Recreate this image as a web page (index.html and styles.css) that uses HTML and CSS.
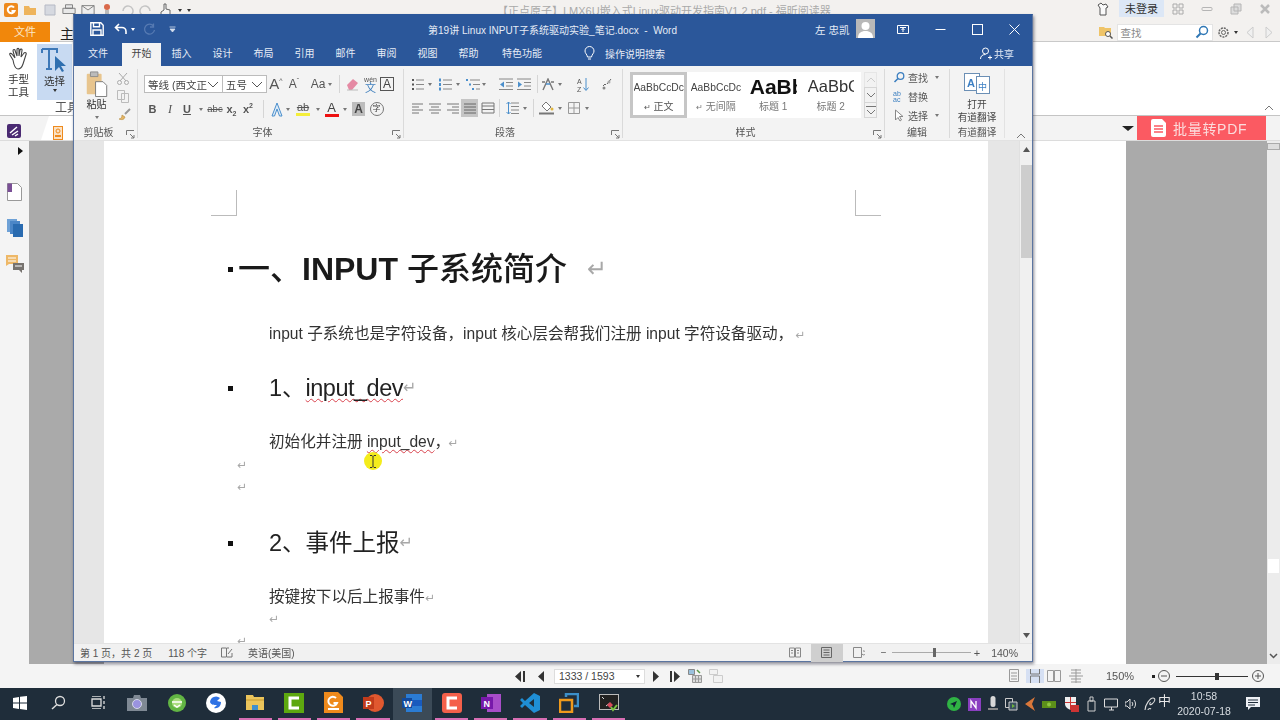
FILE: index.html
```html
<!DOCTYPE html>
<html lang="zh-CN">
<head>
<meta charset="utf-8">
<title>第19讲 Linux INPUT子系统驱动实验_笔记.docx - Word</title>
<link rel="stylesheet" href="styles.css">
</head>
<body>
<div class="screen">
  <div class="reader">
    <div class="rd-top">
      <div class="qa">
        <svg width="14" height="14" viewBox="0 0 14 14"><rect width="14" height="14" rx="2" fill="#ee8a1e"/><path d="M10 4.5A3.5 3.5 0 1 0 10.5 8H7.5" fill="none" stroke="#fff" stroke-width="2"/></svg>
        <svg width="14" height="14" viewBox="0 0 14 14"><path d="M1 3h5l1 2h6v7H1z" fill="#eeb45c"/></svg>
        <svg width="14" height="14" viewBox="0 0 14 14"><path d="M2 2h10v10H2z" fill="#d6d9e0" stroke="#b5b9c4"/></svg>
        <svg width="14" height="14" viewBox="0 0 16 14"><path d="M4 1h8v4H4zM1 5h14v6H1z" fill="#e8e8e8" stroke="#777"/></svg>
        <svg width="14" height="14" viewBox="0 0 16 14"><path d="M1 2h14v10H1zM1 2l7 5 7-5" fill="#eee" stroke="#777"/></svg>
        <svg width="14" height="14" viewBox="0 0 14 14"><circle cx="7" cy="4" r="3" fill="#d9694a"/><path d="M5 7h4v6H5z" fill="#bbb"/></svg>
        <svg width="14" height="14" viewBox="0 0 14 14"><path d="M3 8a5 5 0 1 1 2 4" fill="none" stroke="#c4c4c4" stroke-width="1.5"/></svg>
        <svg width="14" height="14" viewBox="0 0 14 14"><path d="M11 8a5 5 0 1 0-2 4" fill="none" stroke="#c4c4c4" stroke-width="1.5"/></svg>
        <svg width="14" height="14" viewBox="0 0 14 14"><path d="M6 1v6L3 9v4h9V7L8 6V1z" fill="#f4f4f4" stroke="#666"/></svg>
        <b class="dd dark"></b>
        <b class="dd dark"></b>
      </div>
      <div class="rd-title">【正点原子】I.MX6U嵌入式Linux驱动开发指南V1.2.pdf - 福昕阅读器</div>
      <div class="rd-win">
        <svg width="16" height="14" viewBox="0 0 16 14"><path d="M3 3l3-2 2 2 3-1 2 3-2 1v7H5V6z" fill="#fafafa" stroke="#555"/></svg>
        <span class="login">未登录</span>
        <svg width="12" height="12" viewBox="0 0 12 12"><path d="M1 1h4v4H1zM7 1h4v4H7zM1 7h4v4H1zM7 7h4v4H7z" fill="none" stroke="#aaa"/></svg>
        <svg width="12" height="12" viewBox="0 0 12 12"><rect x="1" y="4.500" width="10" height="3" rx="1" fill="none" stroke="#b5b5b5"/></svg>
        <svg width="12" height="12" viewBox="0 0 12 12"><path d="M4 1h7v7H4zM1 4h7v7H1z" fill="#ddd" stroke="#b5b5b5"/></svg>
        <svg width="12" height="12" viewBox="0 0 12 12"><path d="M2 2l8 8M10 2l-8 8" stroke="#bbb" stroke-width="2.500"/></svg>
      </div>
    </div>
    <div class="rd-menu">
      <span class="rd-file">文件</span>
      <span class="rd-home">主</span>
      <div class="rd-search-area">
        <svg width="14" height="14" viewBox="0 0 14 14"><path d="M0 2h5l1 1h6v8H0z" fill="#efc468"/><circle cx="9" cy="9" r="2.500" fill="#fff" stroke="#555"/><path d="M11 11l2.500 2.500" stroke="#555" stroke-width="1.500"/></svg>
        <div class="rd-search"><span>查找</span><svg width="14" height="14" viewBox="0 0 14 14"><circle cx="8.500" cy="5.500" r="4" fill="none" stroke="#2f77b5" stroke-width="1.500"/><path d="M5.500 8.500L1.500 12.500" stroke="#2f77b5" stroke-width="2"/></svg></div>
        <svg width="13" height="13" viewBox="0 0 13 13"><circle cx="6.500" cy="6.500" r="4.500" fill="none" stroke="#666" stroke-width="1.500" stroke-dasharray="2 1"/><circle cx="6.500" cy="6.500" r="2" fill="none" stroke="#666"/></svg>
        <b class="dd dark"></b>
        <svg class="nav-l" width="10" height="13" viewBox="0 0 10 13"><path d="M8 1L2 6.500 8 12z" fill="#f0f0f0" stroke="#ccc"/></svg>
        <svg class="nav-r" width="10" height="13" viewBox="0 0 10 13"><path d="M2 1l6 5.500L2 12z" fill="#f0f0f0" stroke="#ccc"/></svg>
      </div>
    </div>
    <div class="rd-ribbon">
      <div class="rd-tool">
        <svg width="24" height="24" viewBox="0 0 24 24"><path d="M6 13L3 8c-1-2 1-2 2-1l3 4-2-7c0-2 2-2 2-.5L10 9V2.500c0-1.500 2-1.500 2 0V9l1-6c.5-1.500 2.500-1 2 .5L14 10l3-4c1-1 3 0 2 1.500L16 17c-1 3-2 5-5 5-3 0-4-3-5-9z" fill="#fff" stroke="#444" stroke-width="1.100"/></svg>
        <span>手型<br>工具</span>
      </div>
      <div class="rd-tool sel">
        <svg width="30" height="26" viewBox="0 0 30 26"><path d="M2 1h15v4M9 1v20M6 21h6M2 5V1" fill="none" stroke="#3d78b8" stroke-width="2"/><path d="M15 8v15l4-4 3 5 2-1-3-5h5z" fill="#2f6fb0"/></svg>
        <span>选择</span><b class="dd dark"></b>
      </div>
      <div class="rd-grp">工具</div>
      <svg class="rd-up" width="10" height="6" viewBox="0 0 10 6"><path d="M1 5l4-4 4 4" fill="none" stroke="#777"/></svg>
    </div>
    <div class="rd-tabs">
      <svg class="rd-logo" width="14" height="14" viewBox="0 0 14 14"><rect width="14" height="14" rx="2" fill="#4a2a72"/><path d="M3 9l7-6M5 11l6-4M8 12l3-2" stroke="#fff" stroke-width="1.500"/></svg>
      <div class="rd-tab"><svg width="10" height="14" viewBox="0 0 10 14"><rect x=".5" y=".5" width="9" height="13" fill="#fbe2c4" stroke="#ee8a1e"/><circle cx="5" cy="5" r="2" fill="none" stroke="#ee8a1e"/><path d="M2 10h6" stroke="#ee8a1e" stroke-width="2"/></svg></div>
      <b class="dd big"></b>
      <div class="batch"><svg width="16" height="18" viewBox="0 0 16 18"><path d="M2 0h9l4 4v12a2 2 0 0 1-2 2H2a2 2 0 0 1-2-2V2a2 2 0 0 1 2-2z" fill="#fff"/><path d="M3 7h9M3 10h9M3 13h9" stroke="#fb5a62" stroke-width="1.300"/></svg><span>批量转PDF</span></div>
    </div>
    <div class="rd-main">
      <div class="rd-side">
        <b class="side-arrow"></b>
        <svg width="15" height="18" viewBox="0 0 15 18"><path d="M.5.500h10l4 4v13H.5z" fill="#fff" stroke="#999"/><path d="M.5.500H5V9H.5z" fill="#7a4f96"/></svg>
        <svg width="16" height="18" viewBox="0 0 16 18"><path d="M0 0h10v13H0z" fill="#6ea1d6"/><path d="M3 2h10v13H3z" fill="#4b86c7"/><path d="M6 5h10v13H6z" fill="#2a6bb0"/></svg>
        <svg width="18" height="18" viewBox="0 0 18 18"><path d="M0 0h12v9H3l-3 2z" fill="#eeb867"/><path d="M2 3h8M2 6h8" stroke="#fff"/><path d="M7 8h11v7h-2v3l-3-3H7z" fill="#77736f"/><path d="M9 11h7" stroke="#fff"/></svg>
      </div>
      <div class="rd-gray left"></div>
      <div class="rd-page"></div>
      <div class="rd-gray right"></div>
      <div class="rd-scroll"><i class="th-top"></i><i class="th-mid"></i><svg width="9" height="6" viewBox="0 0 9 6"><path d="M1 1l3.500 3.500L8 1" fill="none" stroke="#555" stroke-width="1.500"/></svg></div>
    </div>
    <div class="rd-status">
      <div class="rd-nav">
        <svg width="12" height="11" viewBox="0 0 12 11"><path d="M7 0v11L1 5.500zM9 0h2v11H9z" fill="#333"/></svg>
        <svg class="gap-n" width="7" height="11" viewBox="0 0 7 11"><path d="M6 0v11L0 5.500z" fill="#333"/></svg>
        <div class="page-box"><span>1333 / 1593</span><b class="dd dark"></b></div>
        <svg width="7" height="11" viewBox="0 0 7 11"><path d="M1 0v11l6-5.500z" fill="#333"/></svg>
        <svg class="gap-n" width="12" height="11" viewBox="0 0 12 11"><path d="M5 0v11l6-5.500zM1 0h2v11H1z" fill="#333"/></svg>
        <svg width="14" height="14" viewBox="0 0 14 14"><path d="M.5.500h6v5h-6z" fill="#9ac1dc" stroke="#888"/><path d="M4.500 6.500h9v7h-9zM7.500 6.500v7M10.500 6.500v7M4.500 10h9" fill="#ddd" stroke="#999"/><path d="M9 1l3 3" stroke="#5a9a4a" stroke-width="1.500"/></svg>
        <svg width="14" height="14" viewBox="0 0 14 14"><path d="M.5.500h8v5h-8zM4.500 6.500h9v7h-9z" fill="#f2f2f2" stroke="#ccc"/></svg>
      </div>
      <div class="rd-view">
        <svg class="v-first" width="12" height="14" viewBox="0 0 12 14"><path d="M.5.500h9v12h-9zM2 4h6M2 7h6M2 10h6" fill="none" stroke="#999"/></svg>
        <span class="view-on"><svg width="12" height="14" viewBox="0 0 12 14"><path d="M1.500 0v5h9V0M1.500 14V7h9v7" fill="none" stroke="#777"/></svg></span>
        <svg width="14" height="14" viewBox="0 0 14 14"><path d="M.5 1.500h6v11h-6zM7.500 1.500h6v11h-6z" fill="none" stroke="#999"/></svg>
        <svg width="14" height="14" viewBox="0 0 14 14"><path d="M2 1h10M2 4h10M0 7h14M7 0v14M2 10h10M2 13h10" fill="none" stroke="#999"/></svg>
        <span class="zoom-txt">150%</span>
        <b class="dot"></b>
        <svg width="12" height="12" viewBox="0 0 12 12"><circle cx="6" cy="6" r="5.500" fill="none" stroke="#555"/><path d="M3 6h6" stroke="#555"/></svg>
        <div class="rd-slider"><i></i></div>
        <svg width="12" height="12" viewBox="0 0 12 12"><circle cx="6" cy="6" r="5.500" fill="none" stroke="#555"/><path d="M3 6h6M6 3v6" stroke="#555"/></svg>
      </div>
    </div>
    <div class="taskbar">
      <div class="tb-apps">
        <div class="tb"><svg width="14" height="14" viewBox="0 0 14 14"><path d="M0 2l6-1v5.500H0zM7 .800L14 0v6.500H7zM0 7.500h6V13l-6-1zM7 7.500h7V14l-7-1z" fill="#fff"/></svg></div>
        <div class="tb"><svg width="15" height="15" viewBox="0 0 15 15"><circle cx="9" cy="6" r="4.500" fill="none" stroke="#ddd" stroke-width="1.300"/><path d="M6 9.500L1 14" stroke="#ddd" stroke-width="1.500"/></svg></div>
        <div class="tb"><svg width="15" height="13" viewBox="0 0 15 13"><path d="M1 3h9v7H1zM1 0h9M1 13h9M13 0v3M13 5v3M13 10v3" fill="none" stroke="#ddd" stroke-width="1.300"/></svg></div>
        <div class="tb"><svg width="20" height="16" viewBox="0 0 20 16"><path d="M0 3h6l1-3h6l1 3h6v13H0z" fill="#7f8994"/><circle cx="10" cy="9" r="4.500" fill="#9a93e0" stroke="#d5d8e8"/></svg></div>
        <div class="tb"><svg width="18" height="18" viewBox="0 0 18 18"><circle cx="9" cy="9" r="9" fill="#62b544"/><circle cx="9" cy="9" r="5" fill="#a9dd7e"/><path d="M4 8h10M6 11l3 2 3-2" stroke="#fff" stroke-width="1.500" fill="none"/></svg></div>
        <div class="tb"><svg width="20" height="20" viewBox="0 0 20 20"><circle cx="10" cy="10" r="10" fill="#fff"/><path d="M4 9a6 6 0 0 1 10-4l-3 3 4 1c0 4-3 7-7 6l3-3c-3 0-6 0-7-3z" fill="#2f72e4"/></svg></div>
        <div class="tb run"><svg width="18" height="15" viewBox="0 0 18 15"><path d="M0 0h7l1 2h10v13H0z" fill="#ebc45b"/><path d="M0 5h18" stroke="#c79a2e"/><path d="M6 10h6v5H6z" fill="#3f8fcf"/></svg></div>
        <div class="tb run"><svg width="20" height="20" viewBox="0 0 20 20"><rect width="20" height="20" fill="#5da80f"/><path d="M15 5H6v10h9" fill="none" stroke="#fff" stroke-width="3"/></svg></div>
        <div class="tb run"><svg width="19" height="21" viewBox="0 0 19 21"><path d="M0 0h14l5 5v16H0z" fill="#ef8a1c"/><path d="M12 6a4.500 4.500 0 1 0 1 5H9.500" fill="none" stroke="#fff" stroke-width="2"/><path d="M4 17h11" stroke="#fff" stroke-width="2"/></svg></div>
        <div class="tb run"><svg width="21" height="18" viewBox="0 0 21 18"><circle cx="12" cy="9" r="9" fill="#e0582f"/><rect y="3" width="11" height="12" fill="#c13b1b"/><text x="2.500" y="13" class="tb-t">P</text></svg></div>
        <div class="tb active"><svg width="20" height="18" viewBox="0 0 20 18"><path d="M4 0h16v18H4z" fill="#2b7cd3"/><path d="M4 6h16v6H4z" fill="#185abd"/><rect y="4" width="10" height="10" fill="#124a9c"/><text x="1.500" y="12.500" class="tb-t">W</text></svg></div>
        <div class="tb run"><svg width="20" height="20" viewBox="0 0 20 20"><rect width="20" height="20" rx="3" fill="#f4604a"/><path d="M15 5H6v10h9" fill="none" stroke="#fff" stroke-width="3"/></svg></div>
        <div class="tb run"><svg width="20" height="18" viewBox="0 0 20 18"><path d="M6 0h14v18H6z" fill="#a84dc9"/><rect y="3" width="12" height="12" fill="#7719aa"/><text x="2.500" y="12.500" class="tb-t">N</text></svg></div>
        <div class="tb run"><svg width="20" height="20" viewBox="0 0 20 20"><path d="M14 0l6 3v14l-6 3L5 12l-3 3-2-2 3-3-3-3 2-2 3 3zM14 6l-5 4 5 4z" fill="#1f8fd6" fill-rule="evenodd"/></svg></div>
        <div class="tb run"><svg width="20" height="20" viewBox="0 0 20 20"><path d="M7 4V1h12v12h-4" fill="none" stroke="#3b8fc9" stroke-width="2.500"/><path d="M1 7h12v12H1z" fill="none" stroke="#ef9a1c" stroke-width="2.500"/></svg></div>
        <div class="tb run"><svg width="20" height="18" viewBox="0 0 20 18"><rect x=".5" y=".5" width="19" height="15" fill="#222" stroke="#bbb"/><path d="M3 3l2 2M7 12l4-3 2 2" stroke="#ddd"/><path d="M8 11l3-3 3 3-3 3z" fill="#d94a5a"/><path d="M12 13l2 3 4-5" stroke="#7ac143" stroke-width="2" fill="none"/></svg></div>
      </div>
      <div class="tray">
        <svg width="14" height="14" viewBox="0 0 14 14"><circle cx="7" cy="7" r="7" fill="#2fb344"/><path d="M3 7l7-3-3 7-1-3z" fill="#123"/></svg>
        <svg width="13" height="13" viewBox="0 0 13 13"><rect width="13" height="13" fill="#8a3fc0"/><path d="M3 10V3l5 7V3" stroke="#fff" fill="none" stroke-width="1.300"/></svg>
        <svg width="10" height="16" viewBox="0 0 10 16"><rect x="2.500" width="5" height="11" rx="2.500" fill="#d8d8d8"/><path d="M0 13h10" stroke="#888" stroke-width="2"/></svg>
        <svg width="13" height="13" viewBox="0 0 13 13"><path d="M.5.500h7v9h-7z" fill="none" stroke="#ccc"/><path d="M4 4h8v8H4z" fill="#3a5060" stroke="#ccc"/><path d="M7 6l3 2-3 2z" fill="#6db33f"/></svg>
        <svg width="10" height="14" viewBox="0 0 10 14"><path d="M10 0L0 7l10 7-3-7z" fill="#d9773a"/></svg>
        <svg width="14" height="10" viewBox="0 0 14 10"><path d="M0 2h14v7H0z" fill="#5c8f1a"/><circle cx="7" cy="5.500" r="2" fill="#8ec63f"/></svg>
        <svg width="16" height="16" viewBox="0 0 16 16"><path d="M2 1h11v7c0 3-3 5-5.500 6C5 13 2 11 2 8z" fill="#eee"/><path d="M7 1h1v13H7zM2 6h11v1H2z" fill="#c33"/><rect x="8" y="9" width="8" height="7" fill="#c33"/></svg>
        <svg width="11" height="16" viewBox="0 0 11 16"><path d="M2 5h7v10H2zM4 1h3v4H4z" fill="none" stroke="#ccc"/></svg>
        <svg width="14" height="13" viewBox="0 0 14 13"><path d="M.5 1h13v8H.5zM5 12h5M7.500 9v3" fill="none" stroke="#ddd"/></svg>
        <svg width="12" height="12" viewBox="0 0 12 12"><path d="M0 4h2l3-3v10L2 8H0z" fill="none" stroke="#ddd"/><path d="M7 4a3 3 0 0 1 0 4M9 2a6 6 0 0 1 0 8" fill="none" stroke="#ddd"/></svg>
        <svg width="12" height="14" viewBox="0 0 12 14"><path d="M1 13C1 8 6 1 9 1c3 0 2 4-1 6-2 1.500-3 0-1.500-2M4 13c0-1 2-2 3-1" fill="none" stroke="#ddd" stroke-width="1.100"/></svg>
        <span class="ime">中</span>
        <div class="clock"><span>10:58</span><span>2020-07-18</span></div>
        <svg class="notify" width="14" height="14" viewBox="0 0 14 14"><path d="M0 0h14v10H5l-3 3v-3H0z" fill="#eef1f5"/><path d="M2 3h10M2 5.500h10M2 8h7" stroke="#1f2d3a"/></svg>
      </div>
    </div>
  </div>

  <section class="word">
    <header class="w-title">
      <div class="w-qa">
        <svg width="14" height="14" viewBox="0 0 14 14"><path d="M.8.8h10l2.400 2.400v10H.8zM3.500.8v4h6v-4M3 13V8h8v5" fill="none" stroke="#fff" stroke-width="1.400"/></svg>
        <svg class="q-undo" width="14" height="12" viewBox="0 0 14 12"><path d="M5 1L1.500 4.500 5 8M2 4.500h6a4 4 0 0 1 4 4V11" fill="none" stroke="#fff" stroke-width="1.600"/></svg>
        <b class="dd white"></b>
        <svg class="q-redo" width="13" height="13" viewBox="0 0 13 13"><path d="M10.500 3a5 5 0 1 0 1 4M10.500 .5V4H7" fill="none" stroke="#567ab2" stroke-width="1.300"/></svg>
        <svg class="q-more" width="7" height="7" viewBox="0 0 7 7"><path d="M.5 1h6M1 3l2.500 3L6 3z" fill="#d6dfee" stroke="#d6dfee" stroke-width=".8"/></svg>
      </div>
      <div class="w-name">第19讲 Linux INPUT子系统驱动实验_笔记.docx&nbsp; - &nbsp;Word</div>
      <div class="w-user">左 忠凯</div>
      <svg class="w-avatar" width="19" height="19" viewBox="0 0 19 19"><rect width="19" height="19" fill="#b8b8b8"/><circle cx="9.500" cy="7" r="4" fill="#fff"/><path d="M2 19c0-5 3-7 7.500-7S17 14 17 19z" fill="#fff"/></svg>
      <div class="w-ctl">
        <svg width="12" height="11" viewBox="0 0 12 11"><path d="M.5 1.500h11v8H.5zM3 3.500h6M6 4v4M4.500 6L6 4.500 7.500 6" fill="none" stroke="#fff"/></svg>
        <svg width="11" height="11" viewBox="0 0 11 11"><path d="M.5 5.500h10" stroke="#fff"/></svg>
        <svg width="11" height="11" viewBox="0 0 11 11"><rect x=".5" y=".5" width="10" height="10" fill="none" stroke="#fff"/></svg>
        <svg width="11" height="11" viewBox="0 0 11 11"><path d="M.5.500l10 10M10.500.5l-10 10" stroke="#fff"/></svg>
      </div>
    </header>
    <nav class="w-tabs">
      <span class="t first">文件</span><span class="t on">开始</span><span class="t">插入</span><span class="t">设计</span><span class="t">布局</span><span class="t">引用</span><span class="t">邮件</span><span class="t">审阅</span><span class="t">视图</span><span class="t">帮助</span><span class="t wide">特色功能</span>
      <svg class="bulb" width="11" height="15" viewBox="0 0 11 15"><path d="M3.500 11C3 8 1 7.500 1 5a4.500 4.500 0 0 1 9 0c0 2.500-2 3-2.500 6zM4 13h3" fill="none" stroke="#fff"/></svg>
      <span class="t-help">操作说明搜索</span>
      <span class="share"><svg width="12" height="13" viewBox="0 0 12 13"><circle cx="5.500" cy="4" r="3" fill="none" stroke="#fff"/><path d="M.5 12c0-3 2-4.500 5-4.500M8 10.500h4M10 8.500v4" fill="none" stroke="#fff"/></svg>共享</span>
    </nav>
    <div class="w-ribbon">
      <div class="grp g-clip">
        <div class="clip-body">
          <div class="paste">
            <svg width="23" height="26" viewBox="0 0 23 28"><rect x="1" y="3" width="16" height="22" rx="1" fill="#e8c58e"/><path d="M5 1h8v5H5z" fill="#bbb" stroke="#8a8a8a"/><path d="M10.500 11.500h8l4 4v12h-12z" fill="#fff" stroke="#777"/></svg>
            <span>粘贴</span><b class="dd"></b>
          </div>
          <div class="clip-side">
            <svg width="12" height="13" viewBox="0 0 12 13"><path d="M2 1l7 8M10 1L3 9" stroke="#aaa"/><circle cx="2.500" cy="10.500" r="2" fill="none" stroke="#aaa"/><circle cx="9.500" cy="10.500" r="2" fill="none" stroke="#aaa"/></svg>
            <svg width="12" height="13" viewBox="0 0 12 13"><path d="M.5.500h7v9h-7zM4.500 3.500h7v9h-7z" fill="#f3f3f3" stroke="#bbb"/></svg>
            <svg width="14" height="13" viewBox="0 0 14 13"><path d="M8 6l5-5" stroke="#999" stroke-width="2"/><path d="M2 11c2 0 3-2 3-4l3 2c-1 3-3 3-6 2z" fill="#e4b565" stroke="#b58a3a" stroke-width=".6"/></svg>
          </div>
        </div>
        <div class="g-label">剪贴板<svg class="launch" width="9" height="9" viewBox="0 0 9 9"><path d="M.5 5V.5H8M4 4l4 4M8 5v3H5" fill="none" stroke="#777"/></svg></div>
      </div>
      <div class="grp g-font">
        <div class="rows">
          <div class="row r-font1">
            <div class="combo cf"><span>等线 (西文正文</span><svg width="12" height="7" viewBox="0 0 12 7"><path d="M1 1l5 5 5-5" fill="none" stroke="#555"/></svg></div>
            <div class="combo cs"><span>五号</span><svg width="12" height="7" viewBox="0 0 12 7"><path d="M1 1l5 5 5-5" fill="none" stroke="#555"/></svg></div>
            <span class="cmd a-big">A<sup>^</sup></span>
            <span class="cmd a-small">A<sup>ˇ</sup></span>
            <i></i>
            <span class="cmd aa">Aa</span><b class="dd"></b>
            <u class="sep"></u>
            <svg width="15" height="14" viewBox="0 0 15 14"><path d="M2 8l6-6 5 4-6 7H4z" fill="#e58aa4"/><path d="M2 13h11" stroke="#bbb"/></svg>
            <span class="wen"><small>wén</small>文</span>
            <span class="abox">A</span>
          </div>
          <div class="row r-font2">
            <span class="cmd fb">B</span><span class="cmd fi">I</span><span class="cmd fu">U</span><b class="dd"></b>
            <span class="cmd fs">abc</span><span class="cmd fx">x<sub>2</sub></span><span class="cmd fx">x<sup>2</sup></span>
            <u class="sep"></u>
            <svg width="14" height="15" viewBox="0 0 14 15"><path d="M7 1l5 13H9.500L7 7 4.500 14H2z" fill="#dcebf8" stroke="#4b8fcc"/></svg><b class="dd"></b>
            <span class="hl">ab</span><b class="dd"></b>
            <span class="colr">A</span><b class="dd"></b>
            <span class="shade">A</span>
            <span class="circled">字</span>
          </div>
        </div>
        <div class="g-label shift">字体<svg class="launch" width="9" height="9" viewBox="0 0 9 9"><path d="M.5 5V.5H8M4 4l4 4M8 5v3H5" fill="none" stroke="#777"/></svg></div>
      </div>
      <div class="grp g-para">
        <div class="rows">
          <div class="row r-p1">
            <svg width="12" height="13" viewBox="0 0 12 13"><path d="M4 2h8M4 6.500h8M4 11h8" stroke="#888"/><path d="M0 1h2v2H0zM0 5.500h2v2H0zM0 10h2v2H0z" fill="#555"/></svg><b class="dd"></b>
            <svg width="14" height="13" viewBox="0 0 14 13"><path d="M5 2h9M5 6.500h9M5 11h9" stroke="#888"/><path d="M1 .5h2v3H1zM1 5h2v3H1zM1 9.500h2v3H1z" fill="#4b8fcc"/></svg><b class="dd"></b>
            <i></i>
            <svg width="14" height="13" viewBox="0 0 14 13"><path d="M4 2h10M7 6.500h7M10 11h4" stroke="#888"/><path d="M0 1h2v2H0zM3 5.500h2v2H3zM6 10h2v2H6z" fill="#4b8fcc"/></svg><b class="dd"></b>
            <i></i>
            <svg width="14" height="13" viewBox="0 0 14 13"><path d="M0 1h14M7 4.500h7M7 8h7M0 11.500h14" stroke="#888"/><path d="M5 3.500v6L1 6.500z" fill="#4b8fcc"/></svg>
            <svg width="14" height="13" viewBox="0 0 14 13"><path d="M0 1h14M7 4.500h7M7 8h7M0 11.500h14" stroke="#888"/><path d="M1 3.500v6l4-3z" fill="#4b8fcc"/></svg>
            <u class="sep"></u>
            <svg width="14" height="13" viewBox="0 0 14 13"><path d="M2 12L7 1l5 11M1 4h3M10 4h3" fill="none" stroke="#777" stroke-width="1.400"/><path d="M5 6h4" stroke="#4b8fcc" stroke-width="1.500"/></svg><b class="dd"></b>
            <i></i>
            <svg width="12" height="15" viewBox="0 0 12 15"><text x="0" y="6.500" class="sort-t">A</text><text x="0" y="14.500" class="sort-t">Z</text><path d="M9 1v12M6.500 10.500L9 13.500l2.500-3" fill="none" stroke="#4b8fcc"/></svg>
            <i></i>
            <svg width="10" height="13" viewBox="0 0 10 13"><path d="M1 8l2-2 1 1M5 6l4-5" stroke="#666" fill="none"/><circle cx="2" cy="10" r="1.500" fill="#888"/><circle cx="7" cy="4" r="1.500" fill="#aaa"/></svg>
          </div>
          <div class="row r-p2">
            <svg width="11" height="11" viewBox="0 0 11 11"><path d="M0 1h11M0 4h7M0 7h11M0 10h7" stroke="#777"/></svg>
            <svg width="12" height="11" viewBox="0 0 12 11"><path d="M0 1h12M2 4h8M0 7h12M2 10h8" stroke="#777"/></svg>
            <svg width="12" height="11" viewBox="0 0 12 11"><path d="M0 1h12M5 4h7M0 7h12M5 10h7" stroke="#777"/></svg>
            <span class="just"><svg width="12" height="11" viewBox="0 0 12 11"><path d="M0 1h12M0 4h12M0 7h12M0 10h12" stroke="#666"/></svg></span>
            <svg width="14" height="12" viewBox="0 0 14 12"><path d="M1 1h12M1 11h12M1 4h12M1 7.500h12M1 1v10M13 1v10" stroke="#777" fill="none"/></svg>
            <u class="sep"></u>
            <svg width="13" height="14" viewBox="0 0 13 14"><path d="M5 2h8M5 5.500h8M5 9h8M5 12.500h8" stroke="#888"/><path d="M2.500 1v12M.5 3l2-2 2 2M.5 11l2 2 2-2" fill="none" stroke="#4b8fcc"/></svg><b class="dd"></b>
            <u class="sep"></u>
            <svg width="15" height="14" viewBox="0 0 15 14"><path d="M7 1l5 5-4 4-5-5z" fill="#fff" stroke="#777"/><path d="M0 12.500h15" stroke="#777" stroke-width="2"/><circle cx="13" cy="8" r="1.500" fill="#e1b53b"/></svg><b class="dd"></b>
            <svg width="12" height="12" viewBox="0 0 12 12"><path d="M.5.500h11v11H.5zM6 .5v11M.5 6h11" fill="none" stroke="#999"/></svg><b class="dd"></b>
          </div>
        </div>
        <div class="g-label shift">段落<svg class="launch" width="9" height="9" viewBox="0 0 9 9"><path d="M.5 5V.5H8M4 4l4 4M8 5v3H5" fill="none" stroke="#777"/></svg></div>
      </div>
      <div class="grp g-style">
        <div class="style-body">
          <div class="gallery">
            <div class="st st-on"><span class="st-a">AaBbCcDc</span><span class="st-l"><em>↵</em> 正文</span></div>
            <div class="st"><span class="st-a">AaBbCcDc</span><span class="st-l"><em>↵</em> 无间隔</span></div>
            <div class="st"><span class="st-a h1">AaBbC</span><span class="st-l">标题 1</span></div>
            <div class="st"><span class="st-a h2">AaBbCc</span><span class="st-l">标题 2</span></div>
          </div>
          <div class="spin">
            <span><svg width="10" height="6" viewBox="0 0 10 6"><path d="M1 5l4-4 4 4" fill="none" stroke="#ccc"/></svg></span>
            <span><svg width="10" height="6" viewBox="0 0 10 6"><path d="M1 1l4 4 4-4" fill="none" stroke="#777"/></svg></span>
            <span><svg width="10" height="9" viewBox="0 0 10 9"><path d="M0 .5h10M1 4l4 4 4-4" fill="none" stroke="#777"/></svg></span>
          </div>
        </div>
        <div class="g-label shift">样式<svg class="launch" width="9" height="9" viewBox="0 0 9 9"><path d="M.5 5V.5H8M4 4l4 4M8 5v3H5" fill="none" stroke="#777"/></svg></div>
      </div>
      <div class="grp g-edit">
        <div class="edit-body">
          <div class="ed"><svg width="11" height="11" viewBox="0 0 11 11"><circle cx="7" cy="4" r="3.300" fill="none" stroke="#3c7fc0" stroke-width="1.300"/><path d="M4.500 6.500L1 10" stroke="#3c7fc0" stroke-width="1.600"/></svg><span>查找</span><b class="dd"></b></div>
          <div class="ed"><span class="abc">ab<br>ac</span><span>替换</span></div>
          <div class="ed"><svg width="11" height="13" viewBox="0 0 11 13"><path d="M2 1v10l2.500-2.500L6.500 12 8 11 6 7.500h3.500z" fill="#fff" stroke="#888"/></svg><span>选择</span><b class="dd"></b></div>
        </div>
        <div class="g-label">编辑</div>
      </div>
      <div class="grp g-trans">
        <div class="trans-body">
          <svg width="26" height="21" viewBox="0 0 26 21"><rect x=".5" y=".5" width="15" height="17" fill="#fff" stroke="#6b8fb5"/><rect x="12.500" y="3.500" width="13" height="17" fill="#fff" stroke="#6b8fb5"/><text x="3" y="13.500" class="tr-a">A</text><text x="14" y="16.500" class="tr-z">中</text></svg>
          <span>打开<br>有道翻译</span>
        </div>
        <div class="g-label">有道翻译</div>
      </div>
      <svg class="collapse" width="10" height="6" viewBox="0 0 10 6"><path d="M1 5l4-4 4 4" fill="none" stroke="#777"/></svg>
    </div>
    <div class="w-doc">
      <div class="w-margin"></div>
      <article class="w-page">
        <div class="crops"><i class="crop c-l"></i><i class="crop c-r"></i></div>
        <h1 class="d-h1"><span class="mk mk-h1"></span>一、<b>INPUT</b> 子系统简介 <em class="ret big">↵</em></h1>
        <p class="d-p first">input 子系统也是字符设备，input 核心层会帮我们注册 input 字符设备驱动，<em class="ret">↵</em></p>
        <h2 class="d-h2"><span class="mk"></span>1、<span class="wavy">input_dev</span><em class="ret mid">↵</em></h2>
        <p class="d-p sec"><span class="wt">初始化并注册 <span class="wavy">input_dev</span>，</span><em class="ret">↵</em></p>
        <p class="d-e"><em class="ret">↵</em></p>
        <p class="d-e"><em class="ret">↵</em></p>
        <h2 class="d-h2 two"><span class="mk"></span>2、事件上报<em class="ret mid">↵</em></h2>
        <p class="d-p third">按键按下以后上报事件<em class="ret">↵</em></p>
        <p class="d-e ind"><em class="ret">↵</em></p>
        <p class="d-e"><em class="ret">↵</em></p>
        <div class="pointer"><svg width="8" height="13" viewBox="0 0 8 13"><path d="M1 .5h2l1 1 1-1h2M4 1.500v10M1 12.500h2l1-1 1 1h2" fill="none" stroke="#333"/></svg></div>
      </article>
      <div class="w-margin r"></div>
      <div class="w-scroll">
        <svg width="7" height="5" viewBox="0 0 7 5"><path d="M3.500 0L7 5H0z" fill="#555"/></svg>
        <i class="w-thumb"></i>
        <svg class="down" width="7" height="5" viewBox="0 0 7 5"><path d="M3.500 5L7 0H0z" fill="#555"/></svg>
      </div>
    </div>
    <footer class="w-status">
      <span>第 1 页，共 2 页</span><span class="st2">118 个字</span>
      <svg class="st3" width="12" height="11" viewBox="0 0 12 11"><path d="M.5 1h5v9h-5zM6 1h2M6 10h5V6M7 7l4-5" fill="none" stroke="#777"/></svg>
      <span class="st4">英语(美国)</span>
      <div class="w-right">
        <svg width="12" height="11" viewBox="0 0 12 11"><path d="M.5 1h5v9h-5zM6.500 1h5v9h-5zM2 3.500h2M2 6h2M8 3.500h2M8 6h2" fill="none" stroke="#888"/></svg>
        <span class="w-view"><svg width="11" height="11" viewBox="0 0 11 11"><path d="M.5.500h10v10H.5zM2.500 3h6M2.500 5.500h6M2.500 8h6" fill="none" stroke="#666"/></svg></span>
        <svg width="12" height="11" viewBox="0 0 12 11"><path d="M.5.500h8v10H.5zM10 4a2 2 0 1 1-1 3" fill="none" stroke="#888"/></svg>
        <span class="minus">−</span>
        <div class="w-slider"><i></i></div>
        <span class="plus">+</span>
        <span class="pct">140%</span>
      </div>
    </footer>
  </section>
</div>
</body>
</html>
```
FILE: styles.css
```css
* { box-sizing: border-box; }
html, body { margin: 0; padding: 0; width: 1280px; height: 720px; overflow: hidden; background: #f3f3f3; }
body { font-family: "Liberation Sans", "Noto Sans CJK SC", sans-serif; color: #444; font-size: 11px; }
i, em, b, u { font-style: normal; text-decoration: none; }
svg { display: block; flex: none; }
.screen { position: relative; width: 1280px; height: 720px; overflow: hidden; filter: blur(.45px); }

/* dropdown arrows */
.dd { display: block; width: 0; height: 0; border: 2.500px solid transparent; border-top: 3px solid #777; border-bottom: 0; flex: none; }
.dd.dark { border-top-color: #333; }
.dd.white { border-top-color: #fff; }
.dd.big { border-width: 5px 6px 0; border-top-color: #222; }

/* background reader */
.reader { display: flex; flex-direction: column; width: 1280px; height: 720px; }
.rd-top { height: 21px; display: flex; align-items: flex-start; background: #f3f1ef; }
.qa { width: 500px; padding: 3px 0 0 4px; display: flex; align-items: center; gap: 5.300px; }
.rd-title { font-size: 11px; color: #a9a9a9; white-space: nowrap; width: 590px; padding-top: 3px; line-height: 16px; margin-left: -3px; }
.rd-win { flex: 1; display: flex; align-items: center; height: 17px; margin-left: -3px; padding-right: 9px; justify-content: flex-end; gap: 17px; }
.login { width: 45px; height: 17px; margin: 0 -9px 0 -9px; background: #dce7f6; color: #333; text-align: center; line-height: 18px; }
.rd-menu { height: 21px; display: flex; background: #f3f1ef; border-bottom: 1px solid #c9c9c9; align-items: flex-start; }
.rd-file { width: 50px; height: 20px; margin-top: 1px; background: #f1870b; color: #fbe6c9; text-align: center; line-height: 20px; font-size: 11px; }
.rd-home { margin: 3px 0 0 10px; font-size: 14px; color: #222; line-height: 20px; }
.rd-search-area { margin-left: auto; display: flex; align-items: center; height: 18px; margin-top: 2px; padding-right: 6px; gap: 4px; }
.rd-search { width: 96px; height: 17px; background: #fff; border: 1px solid #e4e4e4; display: flex; align-items: center; justify-content: space-between; padding: 0 3px 0 3px; color: #888; font-size: 10.500px; }
.nav-l { margin-left: 3.500px; }
.nav-r { margin-left: 5px; }
.rd-ribbon { height: 74px; background: #fff; border-bottom: 1px solid #c4c4c4; display: flex; position: relative; padding-top: 2px; }
.rd-tool { width: 37px; display: flex; flex-direction: column; align-items: center; font-size: 10.500px; line-height: 13px; color: #333; padding-top: 3px; height: 56px; gap: 2px; text-align: center; }
.rd-tool.sel { width: 35px; background: #c8daf2; padding-top: 4px; gap: 1px; }
.rd-grp { font-size: 12px; align-self: flex-end; margin: 0 0 -1px -17px; color: #555; line-height: 14px; padding-bottom: 1px; }
.rd-up { position: absolute; right: 6px; top: 63px; }
.rd-tabs { height: 25px; background: #f3f3f3; border-bottom: 1px solid #dcdcdc; display: flex; align-items: center; }
.rd-logo { margin: 6px 0 0 7px; }
.rd-tab { width: 42px; height: 24px; margin-left: 20px; background: #fff; padding: 10px 0 0 12px; align-self: flex-start; clip-path: polygon(8px 0, 100% 0, 100% 100%, 0 100%); }
.rd-tabs .dd.big { margin-left: auto; }
.batch { width: 129px; height: 24px; margin: 0 14px 0 3px; background: #fb5a62; color: #fbdcdc; display: flex; align-items: center; gap: 6px; padding-left: 14px; font-size: 14px; letter-spacing: .7px; align-self: flex-start; }
.rd-main { flex: 1; display: flex; min-height: 0; }
.rd-side { width: 29px; background: #f4f4f4; display: flex; flex-direction: column; align-items: center; gap: 18px; padding-top: 6px; }
.side-arrow { width: 0; height: 0; border: 4px solid transparent; border-left: 5px solid #111; border-right: 0; margin: 0 0 10px 11px; }
.rd-gray { background: #aaaaaa; }
.rd-gray.left { width: 75px; }
.rd-gray.right { width: 141px; }
.rd-page { width: 1022px; background: #fff; }
.rd-scroll { width: 13px; background: #ececec; display: flex; flex-direction: column; align-items: center; padding-top: 2px; }
.th-top { width: 13px; height: 7px; background: #ddd; border: 1px solid #aaa; }
.th-mid { width: 11px; height: 14px; background: #fff; margin-top: 409px; }
.rd-scroll svg { margin-top: 80px; }
.rd-status { height: 24px; background: #f4f4f4; display: flex; align-items: center; padding-left: 514px; }
.rd-nav { display: flex; align-items: center; gap: 7px; }
.gap-n { margin-left: 5px; }
.page-box { width: 91px; height: 15px; background: #fff; border: 1px solid #ddd; display: flex; align-items: center; justify-content: space-between; padding: 0 4px; font-size: 10.500px; color: #444; margin: 0 0 0 2px; }
.rd-nav svg.gap-n:nth-child(5) { margin-left: 3px; }
.rd-view { margin-left: auto; display: flex; align-items: center; padding-right: 16px; gap: 8px; }
.v-first { margin-right: -2px; }
.view-on { width: 18px; height: 14px; background: #d6e0f3; display: flex; justify-content: center; margin: 0 -5px 0 -1px; }
.zoom-txt { width: 26px; margin: 0 11.500px 0 15px; font-size: 11px; color: #555; white-space: nowrap; }
.dot { width: 3px; height: 3px; background: #222; margin-right: -4.500px; }
.rd-slider { width: 72px; height: 1px; background: #333; position: relative; margin: 0 -4px 0 -2px; }
.rd-slider i { position: absolute; left: 39px; top: -3px; width: 4px; height: 7px; background: #333; }
.taskbar { height: 32px; background: #1f2d3a; display: flex; align-items: center; }
.tb-apps { display: flex; }
.tb { width: 39.270px; height: 32px; display: flex; align-items: center; justify-content: center; position: relative; padding-bottom: 3px; }
.tb.run::after { content: ""; position: absolute; left: 3px; right: 3px; bottom: 0; height: 2px; background: #d76eb4; }
.tb.active { background: #3b4a57; }
.tb-t { font: bold 9px "Liberation Sans", sans-serif; fill: #fff; }
.tray { margin-left: auto; display: flex; align-items: center; gap: 7px; height: 32px; padding-right: 20px; }
.ime { font-size: 13px; line-height: 14px; color: #e8e8e8; margin: -6px 0 0 -5px; width: 13px; }
.clock { width: 56px; display: flex; flex-direction: column; align-items: center; color: #d8dde2; font-size: 10.500px; line-height: 15px; margin-left: -2px; white-space: nowrap; }
.notify { margin-left: 7px; }

/* word window */
.word { position: absolute; left: 73px; top: 14px; width: 960px; height: 648px; display: flex; flex-direction: column; border: 1px solid #5b75a0; border-top-color: #2b579a; background: #f3f3f3; box-shadow: 1px 2px 3px rgba(40,40,60,.55); }
.w-title { height: 28px; background: #2b579a; display: flex; align-items: center; color: #fff; flex: none; }
.w-qa { display: flex; align-items: center; width: 354px; padding-left: 16px; }
.q-undo { margin-left: 10px; }
.w-qa .dd { margin-left: 3px; }
.q-redo { margin-left: 8px; }
.q-more { margin-left: 13px; }
.w-name { width: 387px; font-size: 10px; color: #e6ecf6; white-space: nowrap; letter-spacing: .02px; }
.w-user { width: 41px; font-size: 10.500px; color: #e6ecf6; white-space: nowrap; }
.w-avatar { margin-top: -1px; }
.w-ctl { display: flex; align-items: center; gap: 26px; margin-left: 22px; }
.w-tabs { height: 23px; background: #2b579a; color: #e6ecf6; display: flex; align-items: center; flex: none; font-size: 10px; }
.t { width: 41px; height: 23px; text-align: center; line-height: 21px; }
.t.first { width: 48px; }
.t.on { width: 39px; background: #f3f3f3; color: #444; }
.t.wide { width: 60px; margin-left: 3px; }
.bulb { margin-left: 32px; margin-top: -2px; }
.t-help { margin: -2px 0 0 10px; }
.share { margin: -2px 18px 0 auto; display: flex; align-items: center; gap: 2px; }
.w-ribbon { height: 75px; display: flex; flex: none; background: #f3f3f3; position: relative; border-bottom: 1px solid #e2e2e2; }
.grp { display: flex; flex-direction: column; border-right: 1px solid #dadada; margin: 3px 0 2px; position: relative; }
.g-label { height: 16px; margin: auto 0 -3px; text-align: center; font-size: 10px; line-height: 16px; color: #555; position: relative; white-space: nowrap; }
.g-clip .g-label { padding-right: 14px; }
.g-label.shift { padding-right: 16px; }
.launch { position: absolute; right: 2px; top: 5px; }
.g-clip { width: 64px; }
.clip-body { display: flex; padding: 2px 0 0 11px; flex: 1; }
.paste { width: 23px; display: flex; flex-direction: column; align-items: center; font-size: 10px; color: #333; line-height: 13px; }
.paste span { margin-top: 1px; }
.paste .dd { margin-top: 4.500px; }
.clip-side { display: flex; flex-direction: column; gap: 5px; margin-left: 9px; padding-top: 1px; }
.g-font { width: 266px; }
.rows { display: flex; flex-direction: column; }
.row { display: grid; align-items: center; justify-items: center; height: 18px; }
.row .sep { width: 1px; height: 18px; background: #d5d5d5; }
.g-font .rows { padding: 6px 0 0 6px; gap: 7px; }
.r-font1 { grid-template-columns: 79px 44px 18px 18px 8px 14px 10px 8px 18px 19px 14px; }
.r-font2 { grid-template-columns: 17px 18px 16px 12px 16px 17px 16px 14px 13px 10px 20px 10px 17px 9px 19px 17px; }
.combo { display: flex; justify-content: space-between; align-items: center; height: 18px; width: 100%; background: #fff; border: 1px solid #bcbcbc; padding: 0 3px 0 3px; overflow: hidden; font-size: 10.500px; color: #444; white-space: nowrap; }
.cf span { width: 60px; overflow: hidden; }
.cs { margin-left: -1px; width: calc(100% + 1px); }
.cmd { font-size: 12px; color: #555; line-height: 16px; white-space: nowrap; }
.cmd sup, .cmd sub { font-size: 7px; line-height: 0; }
.a-big { font-size: 15px; }
.a-small { font-size: 12px; }
.aa { font-size: 12px; }
.wen { display: flex; flex-direction: column; align-items: center; font-size: 11px; line-height: 9px; color: #3f7fbd; }
.wen small { font-size: 7px; color: #555; }
.abox { width: 14px; height: 14px; border: 1px solid #555; font-size: 12px; line-height: 13px; text-align: center; color: #444; }
.fb { font-weight: bold; font-size: 11px; }
.fi { font-style: italic; font-family: "Liberation Serif", serif; font-size: 12px; }
.fu { text-decoration: underline; font-size: 11px; font-weight: bold; }
.fs { text-decoration: line-through; font-size: 9.500px; }
.fx { font-weight: bold; font-size: 11px; }
.hl { font-size: 11px; line-height: 11px; text-decoration: line-through; border-bottom: 3px solid #f4ee3a; width: 14px; text-align: center; color: #555; }
.colr { font-size: 13px; line-height: 13px; border-bottom: 3px solid #e11; width: 14px; text-align: center; color: #444; }
.shade { width: 13px; height: 14px; background: #bdbdbd; color: #444; font-size: 12px; font-weight: bold; line-height: 14px; text-align: center; }
.circled { width: 14px; height: 14px; border: 1px solid #777; border-radius: 50%; font-size: 8px; line-height: 12px; text-align: center; }
.g-para { width: 219px; }
.g-para .rows { padding: 6px 0 0 6px; gap: 6px; }
.r-p1 { grid-template-columns: 16px 8px 22px 4px 6px 14px 8px 8px 19px 18px 8px 14px 10px 12px 12px 13px 10px; }
.r-p2 { grid-template-columns: 14px 22px 14px 19px 18px 4px 22px 4px 12px 14px 14px 14px 12px; }
.just { width: 17px; height: 18px; background: #c5c5c5; display: flex; align-items: center; justify-content: center; }
.sort-t { font: 7px "Liberation Sans", sans-serif; fill: #555; }
.g-style { width: 262px; }
.style-body { display: flex; padding: 3px 0 0 7px; gap: 2px; }
.gallery { width: 231px; height: 46px; background: #fff; display: flex; overflow: hidden; }
.st { width: 57.500px; flex: none; display: flex; flex-direction: column; align-items: center; overflow: hidden; padding: 3px 1px 0; }
.st-on { border: 3px solid #c6c6c6; padding: 0 0 0; width: 57px; }
.st-a { font-size: 10.300px; line-height: 24px; height: 23px; white-space: nowrap; width: 50px; overflow: hidden; color: #444; padding-top: 1px; }
.st-a.h1 { font-size: 21px; font-weight: bold; color: #111; line-height: 23px; padding: 0; width: 47px; }
.st-a.h2 { font-size: 16.500px; color: #333; line-height: 23px; padding: 0; width: 46px; }
.st-l { font-size: 10px; line-height: 14px; margin-top: 2px; color: #777; white-space: nowrap; }
.st-on .st-l { color: #555; }
.st-l em { font-size: 8px; }
.spin { display: flex; flex-direction: column; width: 13px; height: 46px; margin-left: 1px; }
.spin span { flex: 1; display: flex; align-items: center; justify-content: center; border: 1px solid #d5d5d5; margin-top: -1px; background: #f2f2f2; }
.spin span:first-child { border-color: #e6e6e6; margin-top: 0; }
.g-edit { width: 65px; }
.edit-body { display: flex; flex-direction: column; gap: 4px; padding: 1px 0 0 8px; }
.ed { display: flex; align-items: center; gap: 3px; height: 15px; font-size: 10px; color: #555; }
.ed svg, .abc { width: 12px; }
.ed .dd { margin-left: 4px; }
.abc { font-size: 7px; line-height: 6px; color: #3c7fc0; }
.g-trans { width: 55px; border-right-color: #e2e2e2; }
.trans-body { display: flex; flex-direction: column; align-items: center; padding-top: 4px; font-size: 9.700px; line-height: 13px; color: #444; text-align: center; gap: 4px; }
.g-trans .g-label { font-size: 9.700px; }
.tr-a { font: bold 11px "Liberation Sans", sans-serif; fill: #3b7fc4; }
.tr-z { font: 9px "Noto Sans CJK SC", sans-serif; fill: #3b7fc4; }
.collapse { position: absolute; right: 6px; bottom: 1px; }
.w-doc { flex: 1; display: flex; min-height: 0; overflow: hidden; }
.w-margin { width: 30px; background: #e6e6e6; }
.w-margin.r { width: 31px; }
.w-page { width: 884px; background: #fff; padding-left: 124px; color: #222; font-family: "Liberation Sans", "Noto Sans CJK SC", sans-serif; position: relative; }
.crops { display: flex; justify-content: space-between; width: 670px; margin: 49px 0 0 -17px; }
.crop { width: 26px; height: 26px; display: block; }
.c-l { border-right: 1px solid #bbb; border-bottom: 1px solid #bbb; }
.c-r { border-left: 1px solid #bbb; border-bottom: 1px solid #bbb; }
.d-h1 { margin: 33px 0 0; height: 40px; line-height: 40px; font-size: 32px; font-weight: 500; color: #1a1a1a; display: flex; align-items: center; white-space: pre; }
.d-h1 b { font-weight: bold; }
.mk { width: 41px; flex: none; height: 5px; position: relative; }
.mk::before { content: ""; position: absolute; left: 0; top: 0; width: 5px; height: 5px; background: #111; }
.mk-h1 { width: 10px; }
.d-p { margin: 0 0 0 41px; height: 24px; line-height: 24px; font-size: 15.600px; white-space: nowrap; color: #333; }
.d-p.first { margin-top: 33px; }
.d-p.sec { margin-top: 24px; }
.d-p.third { margin-top: 24px; }
.d-h2 { margin: 24px 0 0; height: 36px; line-height: 36px; font-size: 23.500px; font-weight: normal; color: #222; display: flex; align-items: center; white-space: pre; }
.d-h2.two { margin-top: 26px; }
.wavy { text-decoration: underline wavy #d9434e 1px; text-underline-offset: 2px; }
.d-h2 .wavy { letter-spacing: -.5px; }
.d-e { margin: 0 0 0 9px; height: 22px; line-height: 18px; font-size: 14px; }
.d-p + .d-e { margin-top: 1px; }
.d-e.ind { margin: 0 0 0 41px; }
.ret { font-family: "DejaVu Sans", sans-serif; color: #a8a8a8; font-size: 12px; font-weight: normal; margin-left: 0; }
.ret.mid { font-size: 16px; margin-left: 0; }
.ret.big { font-size: 24px; margin-left: 11px; }
.first .ret { margin-left: 2px; }
.sec .ret { margin-left: -2px; }
.pointer { position: absolute; left: 260px; top: 311px; width: 18px; height: 18px; border-radius: 50%; background: #f4ec1c; display: flex; align-items: center; justify-content: center; }
.w-scroll { width: 13px; background: #f0f0f0; display: flex; flex-direction: column; align-items: center; padding-top: 6px; border-left: 1px solid #e0e0e0; }
.w-thumb { width: 11px; height: 93px; background: #cdcdcd; margin-top: 13px; }
.w-scroll .down { margin-top: auto; margin-bottom: 5px; }
.w-status { height: 18px; background: #f1f1f1; display: flex; align-items: center; padding-left: 6px; font-size: 10px; color: #555; flex: none; border-top: 1px solid #e3e3e3; }
.st2 { margin-left: 16px; }
.st3 { margin-left: 14px; }
.st4 { margin-left: 15px; }
.w-right { margin-left: auto; display: flex; align-items: center; height: 18px; padding-right: 14px; }
.w-view { width: 32px; height: 18px; background: #cfcfcf; display: flex; align-items: center; justify-content: center; margin: 0 10px; }
.minus { margin-left: 16px; }
.w-slider { width: 79px; height: 1px; background: #aaa; margin: 0 3px 0 5px; position: relative; }
.w-slider i { position: absolute; left: 41px; top: -4px; width: 3px; height: 9px; background: #666; }
.plus { font-size: 11px; }
.pct { margin-left: 11px; font-size: 10.500px; }
```
